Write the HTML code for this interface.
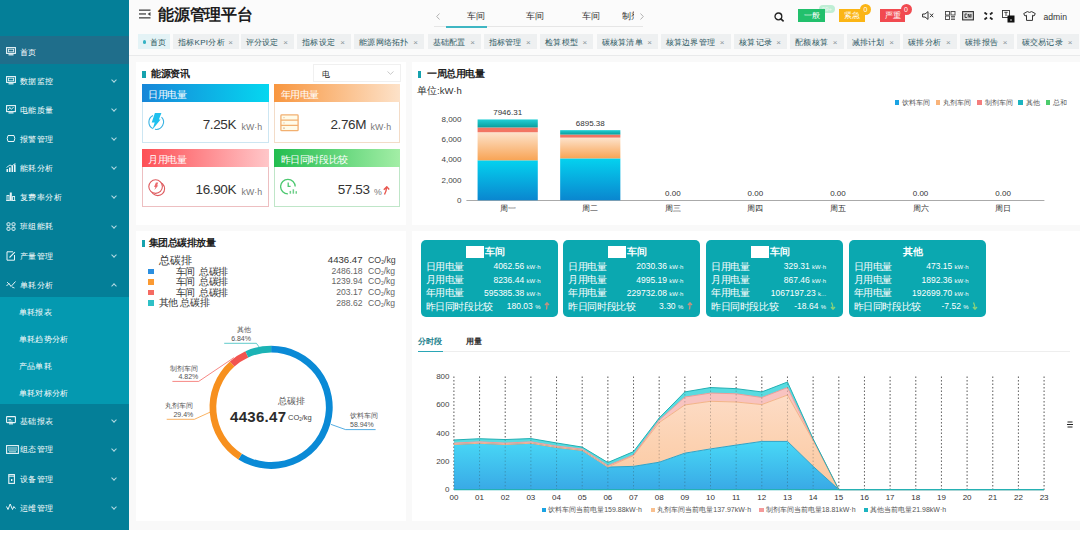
<!DOCTYPE html><html><head><meta charset="utf-8"><style>
html,body{margin:0;padding:0;width:1080px;height:559px;overflow:hidden;background:#fff;font-family:"Liberation Sans",sans-serif;}
.a{position:absolute;}
.t{position:absolute;white-space:nowrap;}
.si{position:absolute;left:0;width:129px;height:0;color:#fff;font-size:8px;}
.si span{position:absolute;left:20px;top:-4px;line-height:10px;white-space:nowrap;letter-spacing:0.4px;}

.si i{position:absolute;left:112px;top:-2.5px;width:3px;height:3px;border-right:0.8px solid #b5dbe3;border-bottom:0.8px solid #b5dbe3;transform:rotate(45deg);}
.ss{position:absolute;left:18.5px;color:#fff;font-size:8px;line-height:10px;white-space:nowrap;letter-spacing:0.4px;}
.tab{position:absolute;top:34px;height:15px;background:#eef0f1;color:#2a5560;font-size:8px;line-height:17px;white-space:nowrap;}
.tab span{position:absolute;left:5px;top:0;letter-spacing:0.3px;}
.tab b{position:absolute;right:6px;top:-0.5px;font-weight:normal;color:#8a9499;font-size:8px;}
.ttl{position:absolute;font-size:10px;letter-spacing:-0.5px;font-weight:bold;color:#222;line-height:12px;white-space:nowrap;}
.mk{position:absolute;width:3.5px;height:7px;background:#16a2ae;}
.ech{position:absolute;color:#fff;font-size:10px;letter-spacing:-0.35px;line-height:21px;height:18px;white-space:nowrap;}
.ech span{position:absolute;left:6.5px;top:0;}
.ecb{position:absolute;box-sizing:border-box;border:1px solid #cfe7f1;border-top:none;background:#fff;}
.val{position:absolute;font-size:13.5px;color:#333;line-height:14px;letter-spacing:-0.4px;white-space:nowrap;text-align:right;}
.unit{position:absolute;font-size:8.8px;color:#777;line-height:10px;white-space:nowrap;}
.wc{position:absolute;top:239.5px;width:137px;height:77.5px;background:#0ba8b0;border-radius:5px;color:#fff;}
.wc .h{position:absolute;top:6px;left:0;width:100%;text-align:center;font-weight:bold;font-size:10px;line-height:12px;}
.wc .l{position:absolute;left:5px;font-size:10px;letter-spacing:-0.4px;line-height:11px;white-space:nowrap;}
.wc .v{position:absolute;right:17px;font-size:8.5px;line-height:11px;text-align:right;white-space:nowrap;}
.wc .u{font-size:6px;}
.lg{position:absolute;font-size:7px;color:#555;line-height:9px;white-space:nowrap;}
</style></head><body>
<div class="a" style="left:0;top:0;width:129px;height:530px;background:#047f98;"></div>
<div class="a" style="left:0;top:36px;width:129px;height:28px;background:#1f6e8b;"></div>
<div class="a" style="left:0;top:297px;width:129px;height:107px;background:#0499b0;"></div>
<div class="si" style="top:51.5px;"><div class="a" style="left:5.5px;top:-4.5px;"><svg width="10" height="9" viewBox="0 0 10 9"><rect x="0.6" y="0.6" width="8.8" height="5.8" fill="none" stroke="#eaf5f8" stroke-width="1.1"/><rect x="2.4" y="2.2" width="5.2" height="2.6" fill="none" stroke="#eaf5f8" stroke-width="0.8"/><rect x="2.5" y="7.2" width="5" height="1.2" fill="#eaf5f8"/></svg></div><span>首页</span></div>
<div class="si" style="top:80.5px;"><div class="a" style="left:5.5px;top:-4.5px;"><svg width="10" height="9" viewBox="0 0 10 9"><rect x="0.6" y="0.6" width="8.8" height="5.8" fill="none" stroke="#eaf5f8" stroke-width="1.1"/><rect x="2.4" y="2.2" width="5.2" height="2.6" fill="none" stroke="#eaf5f8" stroke-width="0.8"/><rect x="2.5" y="7.2" width="5" height="1.2" fill="#eaf5f8"/></svg></div><span>数据监控</span><i></i></div>
<div class="si" style="top:109.5px;"><div class="a" style="left:5.5px;top:-4.5px;"><svg width="10" height="9" viewBox="0 0 10 9"><rect x="0.6" y="0.6" width="8.8" height="6" fill="none" stroke="#eaf5f8" stroke-width="1.1"/><path d="M2.2 5 L3.8 2.4 L5.4 4.4 L7.6 2" fill="none" stroke="#eaf5f8" stroke-width="0.9"/><rect x="2.5" y="7.3" width="5" height="1.2" fill="#eaf5f8"/></svg></div><span>电能质量</span><i></i></div>
<div class="si" style="top:138.5px;"><div class="a" style="left:5.5px;top:-4.5px;"><svg width="10" height="9" viewBox="0 0 10 9"><path d="M2 1.5 H8 L8.8 4.5 L8 7.5 H2 L1.2 4.5 Z" fill="none" stroke="#eaf5f8" stroke-width="1"/></svg></div><span>报警管理</span><i></i></div>
<div class="si" style="top:167.5px;"><div class="a" style="left:5.5px;top:-4.5px;"><svg width="10" height="9" viewBox="0 0 10 9"><rect x="0.5" y="6" width="1.6" height="3" fill="#eaf5f8"/><rect x="3" y="4.5" width="1.6" height="4.5" fill="#eaf5f8"/><rect x="5.5" y="3" width="1.6" height="6" fill="#eaf5f8"/><rect x="8" y="1.5" width="1.6" height="7.5" fill="#eaf5f8"/><path d="M0.5 4.5 L4 2 L6 3 L9.5 0.3" fill="none" stroke="#eaf5f8" stroke-width="0.9"/></svg></div><span>能耗分析</span><i></i></div>
<div class="si" style="top:196.7px;"><div class="a" style="left:5.5px;top:-4.5px;"><svg width="10" height="9" viewBox="0 0 10 9"><rect x="1" y="3.5" width="2" height="5" fill="none" stroke="#eaf5f8" stroke-width="0.9"/><rect x="3.8" y="0.5" width="2" height="8" fill="#eaf5f8"/><rect x="6.6" y="4.5" width="2" height="4" fill="none" stroke="#eaf5f8" stroke-width="0.9"/><path d="M0 8.6 H9.5" stroke="#eaf5f8" stroke-width="0.8"/></svg></div><span>复费率分析</span><i></i></div>
<div class="si" style="top:226px;"><div class="a" style="left:5.5px;top:-4.5px;"><svg width="10" height="9" viewBox="0 0 10 9"><rect x="1" y="0.8" width="3" height="3" rx="0.8" fill="none" stroke="#eaf5f8" stroke-width="1"/><rect x="6" y="0.8" width="3" height="3" rx="0.8" fill="none" stroke="#eaf5f8" stroke-width="1"/><rect x="1" y="5.3" width="3" height="3" rx="0.8" fill="none" stroke="#eaf5f8" stroke-width="1"/><rect x="6" y="5.3" width="3" height="3" rx="0.8" fill="none" stroke="#eaf5f8" stroke-width="1"/></svg></div><span>班组能耗</span><i></i></div>
<div class="si" style="top:255.5px;"><div class="a" style="left:5.5px;top:-4.5px;"><svg width="10" height="10" viewBox="0 0 10 10"><path d="M7 0.8 H1 V9.2 H8.5 V4" fill="none" stroke="#eaf5f8" stroke-width="1"/><path d="M3.5 6.5 L8.8 1.2" stroke="#eaf5f8" stroke-width="1.1"/></svg></div><span>产量管理</span><i></i></div>
<div class="si" style="top:284.7px;"><div class="a" style="left:5.5px;top:-4.5px;"><svg width="10" height="9" viewBox="0 0 10 9"><path d="M0.5 6 L3 3.5 L5 6.5 L9.5 1.5" fill="none" stroke="#eaf5f8" stroke-width="1"/><path d="M1 2 L3 4 M6 7 L8.5 8" stroke="#eaf5f8" stroke-width="0.9"/></svg></div><span>单耗分析</span><i style="transform:rotate(-135deg);top:-1px;"></i></div>
<div class="si" style="top:420.5px;"><div class="a" style="left:5.5px;top:-4.5px;"><svg width="10" height="9" viewBox="0 0 10 9"><rect x="0.6" y="0.6" width="8.8" height="6" rx="0.5" fill="none" stroke="#eaf5f8" stroke-width="1.1"/><path d="M2.5 3.5 H5 M2.5 5 H6.5" stroke="#eaf5f8" stroke-width="0.8"/><rect x="3" y="7.3" width="4" height="1.1" fill="#eaf5f8"/></svg></div><span>基础报表</span><i></i></div>
<div class="si" style="top:449.3px;"><div class="a" style="left:5.5px;top:-4.5px;"><svg width="13" height="9" viewBox="0 0 13 9"><rect x="0.6" y="0.6" width="11.8" height="7.8" fill="none" stroke="#eaf5f8" stroke-width="1.1"/><path d="M2 3 H11 M2 5 H11 M3 6.8 H10" stroke="#eaf5f8" stroke-width="0.8"/></svg></div><span>组态管理</span><i></i></div>
<div class="si" style="top:478.5px;"><div class="a" style="left:5.5px;top:-4.5px;"><svg width="10" height="10" viewBox="0 0 10 10"><rect x="2.8" y="0.6" width="5.6" height="8.8" fill="none" stroke="#eaf5f8" stroke-width="1.1"/><path d="M2.8 2.2 H8.4" stroke="#eaf5f8" stroke-width="1"/><rect x="5" y="5" width="1.4" height="2" fill="#eaf5f8"/></svg></div><span>设备管理</span><i></i></div>
<div class="si" style="top:507.5px;"><div class="a" style="left:5.5px;top:-4.5px;"><svg width="10" height="8" viewBox="0 0 10 8"><path d="M0.5 3.5 L2 6.5 L4.2 1 L6.5 6.5 L7.8 3.5 L9.5 5.5" fill="none" stroke="#eaf5f8" stroke-width="1"/></svg></div><span>运维管理</span><i></i></div>
<div class="ss" style="top:308px;">单耗报表</div>
<div class="ss" style="top:335.4px;">单耗趋势分析</div>
<div class="ss" style="top:362px;">产品单耗</div>
<div class="ss" style="top:389px;">单耗对标分析</div>
<div class="a" style="left:129px;top:0;width:951px;height:56px;background:#fbfbfb;"></div>
<div class="a" style="left:129px;top:55px;width:951px;height:1px;background:#e9eaeb;"></div>
<div class="a" style="left:129px;top:56px;width:951px;height:474px;background:#f9f9f9;"></div>
<svg class="a" style="left:139px;top:9px;" width="12" height="10" viewBox="0 0 12 10"><rect x="0" y="0.5" width="11.5" height="1.3" fill="#444"/><rect x="0" y="4.3" width="7" height="1.3" fill="#444"/><rect x="0" y="8.2" width="11.5" height="1.3" fill="#444"/><path d="M11.5 3 L8.6 4.95 L11.5 6.9 Z" fill="#444"/></svg>
<div class="t" style="left:158px;top:4.8px;font-size:15.5px;line-height:19px;font-weight:bold;color:#1d1d1d;letter-spacing:-0.2px;">能源管理平台</div>
<svg class="a" style="left:435.5px;top:13px;" width="4" height="7" viewBox="0 0 4 7"><path d="M3.5 0.5 L0.7 3.5 L3.5 6.5" fill="none" stroke="#aaa" stroke-width="0.9"/></svg>
<svg class="a" style="left:639.5px;top:13px;" width="4" height="7" viewBox="0 0 4 7"><path d="M0.5 0.5 L3.3 3.5 L0.5 6.5" fill="none" stroke="#aaa" stroke-width="0.9"/></svg>
<div class="a" style="left:434px;top:26px;width:209px;height:1px;background:#e6e6e6;"></div>
<div class="a" style="left:446px;top:25.5px;width:41px;height:2px;background:#3fb6c3;"></div>
<div class="t" style="left:467px;top:11px;font-size:9px;line-height:11px;color:#333;">车间</div>
<div class="t" style="left:526px;top:11px;font-size:9px;line-height:11px;color:#333;">车间</div>
<div class="t" style="left:582px;top:11px;font-size:9px;line-height:11px;color:#333;">车间</div>
<div class="a" style="left:622px;top:9px;width:12px;height:14px;overflow:hidden;"><div class="t" style="left:0;top:2px;font-size:9px;line-height:11px;color:#333;">制剂</div></div>
<svg class="a" style="left:773.5px;top:12px;" width="11" height="10" viewBox="0 0 11 10"><circle cx="4.4" cy="4.4" r="3.4" fill="none" stroke="#222" stroke-width="1.3"/><path d="M6.9 6.9 L9.6 9.4" stroke="#222" stroke-width="1.6"/></svg>
<div class="t" style="left:819px;top:5px;width:16px;height:8px;border-radius:4px;background:#bfeed5;color:#e9f9f0;font-size:6px;line-height:8px;text-align:center;">99+</div>
<div class="t" style="left:798px;top:9px;width:27px;height:13px;background:#22c06c;color:#fff;font-size:8px;line-height:13px;text-align:center;">一般</div>
<div class="t" style="left:839px;top:9px;width:26px;height:13px;background:#fbb515;color:#fff;font-size:8px;line-height:13px;text-align:center;">紧急</div>
<div class="t" style="left:860px;top:3.5px;width:11px;height:11px;border-radius:6px;background:#fbb515;color:#fff;font-size:7px;line-height:11px;text-align:center;">0</div>
<div class="t" style="left:880px;top:9px;width:25px;height:13px;background:#f14a50;color:#fff;font-size:8px;line-height:13px;text-align:center;">严重</div>
<div class="t" style="left:900.5px;top:3.5px;width:11px;height:11px;border-radius:6px;background:#f14a50;color:#fff;font-size:7px;line-height:11px;text-align:center;">0</div>
<svg class="a" style="left:922px;top:11px;" width="12" height="9" viewBox="0 0 12 9"><path d="M0.6 3 H3 L6 0.6 V8.4 L3 6 H0.6 Z" fill="none" stroke="#333" stroke-width="1"/><path d="M8 2.6 L11.2 6.2 M11.2 2.6 L8 6.2" stroke="#333" stroke-width="1"/></svg>
<svg class="a" style="left:945px;top:11px;" width="11" height="9" viewBox="0 0 11 9"><rect x="0.5" y="0.5" width="4" height="3.5" fill="none" stroke="#444" stroke-width="0.9"/><rect x="6" y="0.5" width="4" height="3.5" fill="none" stroke="#444" stroke-width="0.9"/><rect x="0.5" y="5" width="4" height="3.5" fill="none" stroke="#444" stroke-width="0.9"/><path d="M6 5.5 H10 M6 7 H10 M6 8.5 H10" stroke="#444" stroke-width="0.8"/></svg>
<svg class="a" style="left:962px;top:11px;" width="12" height="9.5" viewBox="0 0 12 9.5"><rect x="0.6" y="0.6" width="10.8" height="8.3" fill="#ddd" stroke="#333" stroke-width="1.1"/><path d="M3 3 H5 M3 3 V6.5 H5 M6.2 6.5 V3 L8 6.5 V3 M9 3 V6.5" stroke="#333" stroke-width="0.9" fill="none"/></svg>
<svg class="a" style="left:984px;top:12px;" width="9" height="8" viewBox="0 0 9 8"><path d="M0.5 0.5 L3 2.5 M8.5 0.5 L6 2.5 M0.5 7.5 L3 5.5 M8.5 7.5 L6 5.5" stroke="#222" stroke-width="1.8"/></svg>
<svg class="a" style="left:1002px;top:9.5px;" width="13" height="13" viewBox="0 0 13 13"><rect x="0.5" y="0.5" width="7" height="7" fill="#fff" stroke="#333" stroke-width="0.9"/><path d="M2.3 2.3 H5.7 M4 2.3 V6" stroke="#333" stroke-width="0.9"/><rect x="5.5" y="5.5" width="7" height="7" fill="#111"/><path d="M8 10 H10" stroke="#fff" stroke-width="0.8"/></svg>
<svg class="a" style="left:1023px;top:11px;" width="13" height="10" viewBox="0 0 13 10"><path d="M4.3 0.6 Q6.5 2.2 8.7 0.6 L12.3 2.6 L11 5 L9.5 4.3 V9.4 H3.5 V4.3 L2 5 L0.7 2.6 Z" fill="none" stroke="#333" stroke-width="1" stroke-linejoin="round"/></svg>
<div class="t" style="left:1043.5px;top:12px;font-size:8.6px;line-height:11px;color:#333;">admin</div>
<div class="tab" style="left:138px;width:32px;background:#e4f3f6;"><i class="a" style="left:4.5px;top:6px;width:3.5px;height:3.5px;border-radius:2px;background:#36b3c4;"></i><span style="left:11.5px;">首页</span></div>
<div class="tab" style="left:173px;width:66px;"><span>指标KPI分析</span><b>&#215;</b></div>
<div class="tab" style="left:240.5px;width:53.5px;"><span>评分设定</span><b>&#215;</b></div>
<div class="tab" style="left:297px;width:54px;"><span>指标设定</span><b>&#215;</b></div>
<div class="tab" style="left:354px;width:70px;"><span>能源网络拓扑</span><b>&#215;</b></div>
<div class="tab" style="left:427.5px;width:53.5px;"><span>基础配置</span><b>&#215;</b></div>
<div class="tab" style="left:483.6px;width:53.2px;"><span>指标管理</span><b>&#215;</b></div>
<div class="tab" style="left:540px;width:53.2px;"><span>检算模型</span><b>&#215;</b></div>
<div class="tab" style="left:596.5px;width:61.5px;"><span>碳核算清单</span><b>&#215;</b></div>
<div class="tab" style="left:660.5px;width:70px;"><span>核算边界管理</span><b>&#215;</b></div>
<div class="tab" style="left:734px;width:53px;"><span>核算记录</span><b>&#215;</b></div>
<div class="tab" style="left:790px;width:53.5px;"><span>配额核算</span><b>&#215;</b></div>
<div class="tab" style="left:846.5px;width:53.5px;"><span>减排计划</span><b>&#215;</b></div>
<div class="tab" style="left:903px;width:53.6px;"><span>碳排分析</span><b>&#215;</b></div>
<div class="tab" style="left:960px;width:53.5px;"><span>碳排报告</span><b>&#215;</b></div>
<div class="tab" style="left:1016.5px;width:62px;"><span>碳交易记录</span><b>&#215;</b></div>
<div class="a" style="left:136px;top:62px;width:270px;height:163px;background:#fff;"></div>
<div class="a" style="left:412px;top:62px;width:668px;height:163px;background:#fff;"></div>
<div class="a" style="left:136px;top:231px;width:270px;height:290px;background:#fff;"></div>
<div class="a" style="left:412px;top:231px;width:668px;height:290px;background:#fff;"></div>
<div class="mk" style="left:142px;top:71px;"></div>
<div class="ttl" style="left:151px;top:68px;">能源资讯</div>
<div class="a" style="left:312.7px;top:64.3px;width:88px;height:17.5px;box-sizing:border-box;border:1px solid #f0f0f0;background:#fff;"></div>
<div class="t" style="left:322.3px;top:69.5px;font-size:8px;line-height:10px;color:#222;">电</div>
<svg class="a" style="left:386.5px;top:70.5px;" width="7" height="4" viewBox="0 0 7 4"><path d="M0.5 0.5 L3.5 3.3 L6.5 0.5" fill="none" stroke="#bbb" stroke-width="0.8"/></svg>
<div class="ech" style="left:141.7px;top:84.2px;width:127px;background:linear-gradient(90deg,#1786d8,#05d7f0);"><span>日用电量</span></div>
<div class="ecb" style="left:141.7px;top:102.2px;width:127px;height:40.5px;border-color:#cde6f2;"></div>
<svg class="a" style="left:147px;top:112px;" width="19" height="19" viewBox="0 0 19 19"><path d="M6.00 3.54 A7.3 7.3 0 0 0 5.77 16.55" fill="none" stroke="#3ab2e2" stroke-width="1.1"/><path d="M14.54 5.12 A7.3 7.3 0 0 1 7.93 17.29" fill="none" stroke="#3ab2e2" stroke-width="1.1"/><path d="M7.9 1 L14.4 1 L11.9 7.6 L13.6 7.6 L5.5 17.6 L7.7 10.4 L4.7 10.4 Z" fill="#1ec0ee"/></svg>
<div class="val" style="right:844px;top:118.2px;">7.25K</div>
<div class="unit" style="left:241.5px;top:121.7px;">kW·h</div>
<div class="ech" style="left:274px;top:84.2px;width:126px;background:linear-gradient(90deg,#f8963f,#fde2c9);"><span>年用电量</span></div>
<div class="ecb" style="left:274px;top:102.2px;width:126px;height:40.5px;border-color:#f3dcc8;"></div>
<svg class="a" style="left:280px;top:113.5px;" width="19" height="18" viewBox="0 0 19 18"><rect x="0.9" y="0.9" width="17.2" height="15.8" rx="0.8" fill="#fffbe9" stroke="#f2b070" stroke-width="1.3"/><path d="M0.9 6.1 H18.1 M0.9 11.4 H18.1" stroke="#f2b070" stroke-width="1.3"/><rect x="3.4" y="3" width="1.2" height="1.2" fill="#e8c9a8"/><rect x="3.4" y="8.3" width="1.2" height="1.2" fill="#e8c9a8"/><rect x="3.2" y="13.6" width="1.6" height="1" fill="#c9a07a"/></svg>
<div class="val" style="right:714px;top:118.2px;">2.76M</div>
<div class="unit" style="left:370.5px;top:121.7px;">kW·h</div>
<div class="ech" style="left:141.7px;top:149px;width:127px;background:linear-gradient(90deg,#fd4f55,#ffc7c9);"><span>月用电量</span></div>
<div class="ecb" style="left:141.7px;top:167px;width:127px;height:39.5px;border-color:#edbfc1;"></div>
<svg class="a" style="left:148px;top:178.5px;" width="19" height="18" viewBox="0 0 19 18"><circle cx="9.8" cy="9.8" r="6.8" fill="#fff" stroke="#de5a5e" stroke-width="1.1"/><circle cx="7.6" cy="7.6" r="6.8" fill="#fff" stroke="#de5a5e" stroke-width="1.1"/><path d="M7.9 3.6 L10.2 3.6 L9.1 6.6 L10.3 6.6 L6.4 11 L7.4 7.9 L6.1 7.9 Z" fill="#ec6a6e"/></svg>
<div class="val" style="right:844px;top:183px;">16.90K</div>
<div class="unit" style="left:241.5px;top:186.5px;">kW·h</div>
<div class="ech" style="left:274px;top:149px;width:126px;background:linear-gradient(90deg,#22bd4f,#a3eea6);"><span>昨日同时段比较</span></div>
<div class="ecb" style="left:274px;top:167px;width:126px;height:39.5px;border-color:#bfe6c8;"></div>
<svg class="a" style="left:280px;top:178px;" width="19" height="18" viewBox="0 0 19 18"><path d="M15.2 8.6 A7.3 7.3 0 1 0 7.9 15.9" fill="none" stroke="#4cc870" stroke-width="1.3"/><path d="M8.2 4.6 V8.3 H10.6" fill="none" stroke="#4cc870" stroke-width="1.3"/><rect x="9.6" y="12.9" width="1.5" height="2.8" fill="#6fcf8a"/><rect x="12.6" y="11.3" width="1.5" height="4.4" fill="#6fcf8a"/><rect x="15.5" y="13.2" width="1.5" height="2.5" fill="#6fcf8a"/></svg>
<div class="val" style="right:710.5px;top:183px;">57.53</div>
<div class="unit" style="left:374px;top:186.5px;">%</div>
<svg class="a" style="left:383px;top:186px;" width="7" height="9" viewBox="0 0 7 9"><path d="M1.5 8.5 Q3.5 5 3.5 1.5 M0.8 3.8 L3.8 0.8 L6.2 3.5" fill="none" stroke="#e8574f" stroke-width="1.4"/></svg>
<div class="mk" style="left:417.5px;top:71px;"></div>
<div class="ttl" style="left:427px;top:68px;">一周总用电量</div>
<div class="t" style="left:417px;top:85px;font-size:9.5px;line-height:11px;color:#333;">单位:kW·h</div>
<svg class="a" style="left:0;top:0;" width="1080" height="559" viewBox="0 0 1080 559"><defs><linearGradient id="gb" x1="0" y1="1" x2="0" y2="0"><stop offset="0" stop-color="#0a86cf"/><stop offset="1" stop-color="#04d2ef"/></linearGradient><linearGradient id="go" x1="0" y1="1" x2="0" y2="0"><stop offset="0" stop-color="#f8a455"/><stop offset="1" stop-color="#fde3cc"/></linearGradient><linearGradient id="gt" x1="0" y1="1" x2="0" y2="0"><stop offset="0" stop-color="#0a9e9c"/><stop offset="1" stop-color="#22cfd6"/></linearGradient></defs><text x="461.5" y="121.6" text-anchor="end" font-size="8" fill="#444" font-family="Liberation Sans">8,000</text><text x="461.5" y="141.95000000000002" text-anchor="end" font-size="8" fill="#444" font-family="Liberation Sans">6,000</text><text x="461.5" y="162.3" text-anchor="end" font-size="8" fill="#444" font-family="Liberation Sans">4,000</text><text x="461.5" y="182.65" text-anchor="end" font-size="8" fill="#444" font-family="Liberation Sans">2,000</text><text x="461.5" y="203.0" text-anchor="end" font-size="8" fill="#444" font-family="Liberation Sans">0</text><rect x="466.4" y="200" width="578" height="1" fill="#aaa"/><text x="507.68571428571425" y="210.8" text-anchor="middle" font-size="8" fill="#333" font-family="Liberation Sans">周一</text><rect x="477.58571428571423" y="160.31225" width="60.2" height="39.987750000000005" fill="url(#gb)"/><rect x="477.58571428571423" y="132.22925" width="60.2" height="28.083" fill="url(#go)"/><rect x="477.58571428571423" y="127.447" width="60.2" height="4.782250000000005" fill="#f27563"/><rect x="477.58571428571423" y="119.44945" width="60.2" height="7.997550000000004" fill="url(#gt)"/><text x="507.68571428571425" y="115.44945" text-anchor="middle" font-size="8" fill="#333" font-family="Liberation Sans">7946.31</text><text x="590.2571428571429" y="210.8" text-anchor="middle" font-size="8" fill="#333" font-family="Liberation Sans">周二</text><rect x="560.1571428571428" y="158.37900000000002" width="60.2" height="41.92099999999999" fill="url(#gb)"/><rect x="560.1571428571428" y="137.622" width="60.2" height="20.757000000000005" fill="url(#go)"/><rect x="560.1571428571428" y="134.5695" width="60.2" height="3.052500000000009" fill="#f27563"/><rect x="560.1571428571428" y="130.143375" width="60.2" height="4.426125000000013" fill="url(#gt)"/><text x="590.2571428571429" y="126.14337499999999" text-anchor="middle" font-size="8" fill="#333" font-family="Liberation Sans">6895.38</text><text x="672.8285714285714" y="210.8" text-anchor="middle" font-size="8" fill="#333" font-family="Liberation Sans">周三</text><text x="672.8285714285714" y="196" text-anchor="middle" font-size="8" fill="#333" font-family="Liberation Sans">0.00</text><text x="755.4" y="210.8" text-anchor="middle" font-size="8" fill="#333" font-family="Liberation Sans">周四</text><text x="755.4" y="196" text-anchor="middle" font-size="8" fill="#333" font-family="Liberation Sans">0.00</text><text x="837.9714285714285" y="210.8" text-anchor="middle" font-size="8" fill="#333" font-family="Liberation Sans">周五</text><text x="837.9714285714285" y="196" text-anchor="middle" font-size="8" fill="#333" font-family="Liberation Sans">0.00</text><text x="920.5428571428571" y="210.8" text-anchor="middle" font-size="8" fill="#333" font-family="Liberation Sans">周六</text><text x="920.5428571428571" y="196" text-anchor="middle" font-size="8" fill="#333" font-family="Liberation Sans">0.00</text><text x="1003.1142857142856" y="210.8" text-anchor="middle" font-size="8" fill="#333" font-family="Liberation Sans">周日</text><text x="1003.1142857142856" y="196" text-anchor="middle" font-size="8" fill="#333" font-family="Liberation Sans">0.00</text></svg>
<div class="a" style="left:894.7px;top:100.3px;width:4.5px;height:4.5px;background:#1aa3e3;"></div>
<div class="lg" style="left:902.2px;top:98px;">饮料车间</div>
<div class="a" style="left:935.8px;top:100.3px;width:4.5px;height:4.5px;background:#f9b47a;"></div>
<div class="lg" style="left:943.3px;top:98px;">丸剂车间</div>
<div class="a" style="left:977px;top:100.3px;width:4.5px;height:4.5px;background:#f47d7d;"></div>
<div class="lg" style="left:984.5px;top:98px;">制剂车间</div>
<div class="a" style="left:1018.3px;top:100.3px;width:4.5px;height:4.5px;background:#1cb4c0;"></div>
<div class="lg" style="left:1025.8px;top:98px;">其他</div>
<div class="a" style="left:1045.8px;top:100.3px;width:4.5px;height:4.5px;background:#4ccc6c;"></div>
<div class="lg" style="left:1053.3px;top:98px;">总和</div>
<div class="mk" style="left:141.7px;top:239.7px;"></div>
<div class="ttl" style="left:148.5px;top:237px;">集团总碳排放量</div>
<div class="t" style="left:158.5px;top:254px;font-size:10.5px;line-height:12px;color:#333;">总碳排</div>
<div class="t" style="right:717.5px;top:254px;font-size:9.6px;line-height:12px;color:#333;">4436.47</div>
<div class="t" style="left:368px;top:254px;font-size:8.8px;line-height:12px;color:#444;">CO<sub style="font-size:5px;vertical-align:-1px;">2</sub>/kg</div>
<div class="a" style="left:148.2px;top:268.7px;width:5.7px;height:5.7px;background:#2b8fe0;"></div>
<div class="t" style="left:175.5px;top:265.5px;font-size:10px;letter-spacing:-0.3px;line-height:12px;color:#333;">车间</div>
<div class="t" style="left:199.0px;top:265.5px;font-size:10px;letter-spacing:-0.3px;line-height:12px;color:#333;">总碳排</div>
<div class="t" style="right:717.5px;top:266.0px;font-size:8.6px;line-height:11px;color:#666;">2486.18</div>
<div class="t" style="left:368px;top:266.0px;font-size:8.6px;line-height:11px;color:#666;">CO<sub style="font-size:5px;vertical-align:-1px;">2</sub>/kg</div>
<div class="a" style="left:148.2px;top:279.0px;width:5.7px;height:5.7px;background:#fb9a32;"></div>
<div class="t" style="left:175.5px;top:275.8px;font-size:10px;letter-spacing:-0.3px;line-height:12px;color:#333;">车间</div>
<div class="t" style="left:199.0px;top:275.8px;font-size:10px;letter-spacing:-0.3px;line-height:12px;color:#333;">总碳排</div>
<div class="t" style="right:717.5px;top:276.3px;font-size:8.6px;line-height:11px;color:#666;">1239.94</div>
<div class="t" style="left:368px;top:276.3px;font-size:8.6px;line-height:11px;color:#666;">CO<sub style="font-size:5px;vertical-align:-1px;">2</sub>/kg</div>
<div class="a" style="left:148.2px;top:289.7px;width:5.7px;height:5.7px;background:#f56b62;"></div>
<div class="t" style="left:175.5px;top:286.5px;font-size:10px;letter-spacing:-0.3px;line-height:12px;color:#333;">车间</div>
<div class="t" style="left:199.0px;top:286.5px;font-size:10px;letter-spacing:-0.3px;line-height:12px;color:#333;">总碳排</div>
<div class="t" style="right:717.5px;top:287.0px;font-size:8.6px;line-height:11px;color:#666;">203.17</div>
<div class="t" style="left:368px;top:287.0px;font-size:8.6px;line-height:11px;color:#666;">CO<sub style="font-size:5px;vertical-align:-1px;">2</sub>/kg</div>
<div class="a" style="left:148.2px;top:300.4px;width:5.7px;height:5.7px;background:#2ec0c6;"></div>
<div class="t" style="left:158.5px;top:297.2px;font-size:10px;letter-spacing:-0.3px;line-height:12px;color:#333;">其他</div>
<div class="t" style="left:180.4px;top:297.2px;font-size:10px;letter-spacing:-0.3px;line-height:12px;color:#333;">总碳排</div>
<div class="t" style="right:717.5px;top:297.7px;font-size:8.6px;line-height:11px;color:#666;">288.62</div>
<div class="t" style="left:368px;top:297.7px;font-size:8.6px;line-height:11px;color:#666;">CO<sub style="font-size:5px;vertical-align:-1px;">2</sub>/kg</div>
<svg class="a" style="left:0;top:0;" width="1080" height="559" viewBox="0 0 1080 559"><path d="M271.10 345.70 A61.6 61.6 0 1 1 238.29 459.43 L241.91 453.68 A54.8 54.8 0 1 0 271.10 352.50 Z" fill="#0a8ad6"/><path d="M238.29 459.43 A61.6 61.6 0 0 1 229.90 361.51 L234.45 366.56 A54.8 54.8 0 0 0 241.91 453.68 Z" fill="#f7901e"/><path d="M229.90 361.51 A61.6 61.6 0 0 1 245.43 351.30 L248.27 357.48 A54.8 54.8 0 0 0 234.45 366.56 Z" fill="#f2544f"/><path d="M245.43 351.30 A61.6 61.6 0 0 1 271.10 345.70 L271.10 352.50 A54.8 54.8 0 0 0 248.27 357.48 Z" fill="#1bb3b5"/><polyline points="224.2,343.3 256.4,343.3 259.5,347.5" fill="none" stroke="#1bb3b5" stroke-width="0.7"/><polyline points="172.4,381.4 198.7,381.4 234,357.6" fill="none" stroke="#f2544f" stroke-width="0.7"/><polyline points="166.7,419.3 194.4,419.3 210,412.2" fill="none" stroke="#f7901e" stroke-width="0.7"/><polyline points="331,424.4 345.6,429.6 375.6,429.6" fill="none" stroke="#0a8ad6" stroke-width="0.7"/></svg>
<div class="t" style="right:829px;top:325px;font-size:7px;line-height:9px;color:#555;">其他</div>
<div class="t" style="right:829px;top:333.8px;font-size:7px;line-height:9px;color:#555;">6.84%</div>
<div class="t" style="right:881.7px;top:363.5px;font-size:7px;line-height:9px;color:#555;">制剂车间</div>
<div class="t" style="right:881.7px;top:372.4px;font-size:7px;line-height:9px;color:#555;">4.82%</div>
<div class="t" style="right:886.7px;top:401px;font-size:7px;line-height:9px;color:#555;">丸剂车间</div>
<div class="t" style="right:886.7px;top:409.5px;font-size:7px;line-height:9px;color:#555;">29.4%</div>
<div class="t" style="left:350px;top:411px;font-size:7px;line-height:9px;color:#555;">饮料车间</div>
<div class="t" style="left:350px;top:419.8px;font-size:7px;line-height:9px;color:#555;">58.94%</div>
<div class="t" style="left:277.5px;top:395.5px;font-size:8.5px;line-height:11px;color:#555;">总碳排</div>
<div class="t" style="left:230px;top:408px;font-size:15px;line-height:17px;font-weight:bold;color:#2b2b2b;letter-spacing:0.3px;">4436.47</div>
<div class="t" style="left:288px;top:412.5px;font-size:7.5px;line-height:9px;color:#444;">CO<sub style="font-size:4.5px;vertical-align:-1px;">2</sub>/kg</div>
<div class="wc" style="left:420.5px;">
<div class="h" style="text-align:left;left:64px;width:auto;">车间</div>
<div class="a" style="left:45px;top:6px;width:18px;height:12px;background:#fff;"></div>
<div class="l" style="top:21px;">日用电量</div>
<div class="v" style="top:21.5px;">4062.56 <span class="u">kW·h</span></div>
<div class="l" style="top:34.8px;">月用电量</div>
<div class="v" style="top:35.3px;">8236.44 <span class="u">kW·h</span></div>
<div class="l" style="top:47.6px;">年用电量</div>
<div class="v" style="top:48.1px;">595385.38 <span class="u">kW·h</span></div>
<div class="l" style="top:61.3px;">昨日同时段比较</div>
<div class="v" style="top:61.8px;">180.03 <span class="u">%</span></div>
<svg class="a" style="left:123.5px;top:62px;" width="6" height="8" viewBox="0 0 6 8"><path d="M2.5 7.5 Q3 4.5 3 1.2 M1 3 L3 0.8 L5 3" fill="none" stroke="#c89080" stroke-width="1.3"/></svg>
</div>
<div class="wc" style="left:563.3px;">
<div class="h" style="text-align:left;left:64px;width:auto;">车间</div>
<div class="a" style="left:45px;top:6px;width:18px;height:12px;background:#fff;"></div>
<div class="l" style="top:21px;">日用电量</div>
<div class="v" style="top:21.5px;">2030.36 <span class="u">kW·h</span></div>
<div class="l" style="top:34.8px;">月用电量</div>
<div class="v" style="top:35.3px;">4995.19 <span class="u">kW·h</span></div>
<div class="l" style="top:47.6px;">年用电量</div>
<div class="v" style="top:48.1px;">229732.08 <span class="u">kW·h</span></div>
<div class="l" style="top:61.3px;">昨日同时段比较</div>
<div class="v" style="top:61.8px;">3.30 <span class="u">%</span></div>
<svg class="a" style="left:123.5px;top:62px;" width="6" height="8" viewBox="0 0 6 8"><path d="M2.5 7.5 Q3 4.5 3 1.2 M1 3 L3 0.8 L5 3" fill="none" stroke="#c89080" stroke-width="1.3"/></svg>
</div>
<div class="wc" style="left:706.1px;">
<div class="h" style="text-align:left;left:64px;width:auto;">车间</div>
<div class="a" style="left:45px;top:6px;width:18px;height:12px;background:#fff;"></div>
<div class="l" style="top:21px;">日用电量</div>
<div class="v" style="top:21.5px;">329.31 <span class="u">kW·h</span></div>
<div class="l" style="top:34.8px;">月用电量</div>
<div class="v" style="top:35.3px;">867.46 <span class="u">kW·h</span></div>
<div class="l" style="top:47.6px;">年用电量</div>
<div class="v" style="top:48.1px;">1067197.23 <span class="u">k...</span></div>
<div class="l" style="top:61.3px;">昨日同时段比较</div>
<div class="v" style="top:61.8px;">-18.64 <span class="u">%</span></div>
<svg class="a" style="left:123.5px;top:62px;" width="6" height="8" viewBox="0 0 6 8"><path d="M1.5 0.5 Q3 3.5 3 6.8 M1 5 L3 7.2 L5 5" fill="none" stroke="#8ad27a" stroke-width="1.3"/></svg>
</div>
<div class="wc" style="left:848.6px;">
<div class="h" style="left:-4.5px;">其他</div>
<div class="l" style="top:21px;">日用电量</div>
<div class="v" style="top:21.5px;">473.15 <span class="u">kW·h</span></div>
<div class="l" style="top:34.8px;">月用电量</div>
<div class="v" style="top:35.3px;">1892.36 <span class="u">kW·h</span></div>
<div class="l" style="top:47.6px;">年用电量</div>
<div class="v" style="top:48.1px;">192699.70 <span class="u">kW·h</span></div>
<div class="l" style="top:61.3px;">昨日同时段比较</div>
<div class="v" style="top:61.8px;">-7.52 <span class="u">%</span></div>
<svg class="a" style="left:123.5px;top:62px;" width="6" height="8" viewBox="0 0 6 8"><path d="M1.5 0.5 Q3 3.5 3 6.8 M1 5 L3 7.2 L5 5" fill="none" stroke="#8ad27a" stroke-width="1.3"/></svg>
</div>
<div class="t" style="left:417.5px;top:335.5px;font-size:8px;line-height:11px;font-weight:bold;color:#1c7f8c;">分时段</div>
<div class="t" style="left:465.5px;top:335.5px;font-size:8px;line-height:11px;font-weight:bold;color:#333;">用量</div>
<div class="a" style="left:417.5px;top:351px;width:652px;height:1px;background:#eeeeee;"></div>
<div class="a" style="left:417.5px;top:350.5px;width:25px;height:1.6px;background:#2aa6b6;"></div>
<svg class="a" style="left:0;top:0;" width="1080" height="559" viewBox="0 0 1080 559"><defs><linearGradient id="ab" x1="0" y1="0" x2="0" y2="1"><stop offset="0" stop-color="#48d8f6"/><stop offset="1" stop-color="#39a9e6"/></linearGradient><linearGradient id="ao" x1="0" y1="0" x2="0" y2="1"><stop offset="0" stop-color="#fddcc6"/><stop offset="1" stop-color="#fbc89e"/></linearGradient></defs><text x="449.5" y="379.00000000000006" text-anchor="end" font-size="8" fill="#444" font-family="Liberation Sans">800</text><text x="449.5" y="407.35" text-anchor="end" font-size="8" fill="#444" font-family="Liberation Sans">600</text><text x="449.5" y="435.70000000000005" text-anchor="end" font-size="8" fill="#444" font-family="Liberation Sans">400</text><text x="449.5" y="464.05" text-anchor="end" font-size="8" fill="#444" font-family="Liberation Sans">200</text><text x="449.5" y="492.40000000000003" text-anchor="end" font-size="8" fill="#444" font-family="Liberation Sans">0</text><text x="453.90" y="500.3" text-anchor="middle" font-size="8" fill="#333" font-family="Liberation Sans">00</text><text x="479.56" y="500.3" text-anchor="middle" font-size="8" fill="#333" font-family="Liberation Sans">01</text><text x="505.22" y="500.3" text-anchor="middle" font-size="8" fill="#333" font-family="Liberation Sans">02</text><text x="530.88" y="500.3" text-anchor="middle" font-size="8" fill="#333" font-family="Liberation Sans">03</text><text x="556.54" y="500.3" text-anchor="middle" font-size="8" fill="#333" font-family="Liberation Sans">04</text><text x="582.20" y="500.3" text-anchor="middle" font-size="8" fill="#333" font-family="Liberation Sans">05</text><text x="607.86" y="500.3" text-anchor="middle" font-size="8" fill="#333" font-family="Liberation Sans">06</text><text x="633.52" y="500.3" text-anchor="middle" font-size="8" fill="#333" font-family="Liberation Sans">07</text><text x="659.18" y="500.3" text-anchor="middle" font-size="8" fill="#333" font-family="Liberation Sans">08</text><text x="684.84" y="500.3" text-anchor="middle" font-size="8" fill="#333" font-family="Liberation Sans">09</text><text x="710.50" y="500.3" text-anchor="middle" font-size="8" fill="#333" font-family="Liberation Sans">10</text><text x="736.16" y="500.3" text-anchor="middle" font-size="8" fill="#333" font-family="Liberation Sans">11</text><text x="761.82" y="500.3" text-anchor="middle" font-size="8" fill="#333" font-family="Liberation Sans">12</text><text x="787.48" y="500.3" text-anchor="middle" font-size="8" fill="#333" font-family="Liberation Sans">13</text><text x="813.14" y="500.3" text-anchor="middle" font-size="8" fill="#333" font-family="Liberation Sans">14</text><text x="838.80" y="500.3" text-anchor="middle" font-size="8" fill="#333" font-family="Liberation Sans">15</text><text x="864.46" y="500.3" text-anchor="middle" font-size="8" fill="#333" font-family="Liberation Sans">16</text><text x="890.12" y="500.3" text-anchor="middle" font-size="8" fill="#333" font-family="Liberation Sans">17</text><text x="915.78" y="500.3" text-anchor="middle" font-size="8" fill="#333" font-family="Liberation Sans">18</text><text x="941.44" y="500.3" text-anchor="middle" font-size="8" fill="#333" font-family="Liberation Sans">19</text><text x="967.10" y="500.3" text-anchor="middle" font-size="8" fill="#333" font-family="Liberation Sans">20</text><text x="992.76" y="500.3" text-anchor="middle" font-size="8" fill="#333" font-family="Liberation Sans">21</text><text x="1018.42" y="500.3" text-anchor="middle" font-size="8" fill="#333" font-family="Liberation Sans">22</text><text x="1044.08" y="500.3" text-anchor="middle" font-size="8" fill="#333" font-family="Liberation Sans">23</text><line x1="453.90" y1="376.5" x2="453.90" y2="489.6" stroke="#333" stroke-opacity="0.8" stroke-width="0.8" stroke-dasharray="1.5,2"/><line x1="479.56" y1="376.5" x2="479.56" y2="489.6" stroke="#333" stroke-opacity="0.8" stroke-width="0.8" stroke-dasharray="1.5,2"/><line x1="505.22" y1="376.5" x2="505.22" y2="489.6" stroke="#333" stroke-opacity="0.8" stroke-width="0.8" stroke-dasharray="1.5,2"/><line x1="530.88" y1="376.5" x2="530.88" y2="489.6" stroke="#333" stroke-opacity="0.8" stroke-width="0.8" stroke-dasharray="1.5,2"/><line x1="556.54" y1="376.5" x2="556.54" y2="489.6" stroke="#333" stroke-opacity="0.8" stroke-width="0.8" stroke-dasharray="1.5,2"/><line x1="582.20" y1="376.5" x2="582.20" y2="489.6" stroke="#333" stroke-opacity="0.8" stroke-width="0.8" stroke-dasharray="1.5,2"/><line x1="607.86" y1="376.5" x2="607.86" y2="489.6" stroke="#333" stroke-opacity="0.8" stroke-width="0.8" stroke-dasharray="1.5,2"/><line x1="633.52" y1="376.5" x2="633.52" y2="489.6" stroke="#333" stroke-opacity="0.8" stroke-width="0.8" stroke-dasharray="1.5,2"/><line x1="659.18" y1="376.5" x2="659.18" y2="489.6" stroke="#333" stroke-opacity="0.8" stroke-width="0.8" stroke-dasharray="1.5,2"/><line x1="684.84" y1="376.5" x2="684.84" y2="489.6" stroke="#333" stroke-opacity="0.8" stroke-width="0.8" stroke-dasharray="1.5,2"/><line x1="710.50" y1="376.5" x2="710.50" y2="489.6" stroke="#333" stroke-opacity="0.8" stroke-width="0.8" stroke-dasharray="1.5,2"/><line x1="736.16" y1="376.5" x2="736.16" y2="489.6" stroke="#333" stroke-opacity="0.8" stroke-width="0.8" stroke-dasharray="1.5,2"/><line x1="761.82" y1="376.5" x2="761.82" y2="489.6" stroke="#333" stroke-opacity="0.8" stroke-width="0.8" stroke-dasharray="1.5,2"/><line x1="787.48" y1="376.5" x2="787.48" y2="489.6" stroke="#333" stroke-opacity="0.8" stroke-width="0.8" stroke-dasharray="1.5,2"/><line x1="813.14" y1="376.5" x2="813.14" y2="489.6" stroke="#333" stroke-opacity="0.8" stroke-width="0.8" stroke-dasharray="1.5,2"/><line x1="838.80" y1="376.5" x2="838.80" y2="489.6" stroke="#333" stroke-opacity="0.8" stroke-width="0.8" stroke-dasharray="1.5,2"/><line x1="864.46" y1="376.5" x2="864.46" y2="489.6" stroke="#333" stroke-opacity="0.8" stroke-width="0.8" stroke-dasharray="1.5,2"/><line x1="890.12" y1="376.5" x2="890.12" y2="489.6" stroke="#333" stroke-opacity="0.8" stroke-width="0.8" stroke-dasharray="1.5,2"/><line x1="915.78" y1="376.5" x2="915.78" y2="489.6" stroke="#333" stroke-opacity="0.8" stroke-width="0.8" stroke-dasharray="1.5,2"/><line x1="941.44" y1="376.5" x2="941.44" y2="489.6" stroke="#333" stroke-opacity="0.8" stroke-width="0.8" stroke-dasharray="1.5,2"/><line x1="967.10" y1="376.5" x2="967.10" y2="489.6" stroke="#333" stroke-opacity="0.8" stroke-width="0.8" stroke-dasharray="1.5,2"/><line x1="992.76" y1="376.5" x2="992.76" y2="489.6" stroke="#333" stroke-opacity="0.8" stroke-width="0.8" stroke-dasharray="1.5,2"/><line x1="1018.42" y1="376.5" x2="1018.42" y2="489.6" stroke="#333" stroke-opacity="0.8" stroke-width="0.8" stroke-dasharray="1.5,2"/><line x1="1044.08" y1="376.5" x2="1044.08" y2="489.6" stroke="#333" stroke-opacity="0.8" stroke-width="0.8" stroke-dasharray="1.5,2"/><path d="M453.90,444.52 L479.56,443.25 L505.22,444.52 L530.88,443.25 L556.54,447.50 L582.20,450.48 L607.86,467.06 L633.52,466.35 L659.18,462.24 L684.84,453.17 L710.50,448.92 L736.16,445.09 L761.82,441.41 L787.48,441.41 L813.14,466.35 L838.80,489.60 L864.46,489.60 L890.12,489.60 L915.78,489.60 L941.44,489.60 L967.10,489.60 L992.76,489.60 L1018.42,489.60 L1044.08,489.60 L1044.08,489.60 L1018.42,489.60 L992.76,489.60 L967.10,489.60 L941.44,489.60 L915.78,489.60 L890.12,489.60 L864.46,489.60 L838.80,489.60 L813.14,489.60 L787.48,489.60 L761.82,489.60 L736.16,489.60 L710.50,489.60 L684.84,489.60 L659.18,489.60 L633.52,489.60 L607.86,489.60 L582.20,489.60 L556.54,489.60 L530.88,489.60 L505.22,489.60 L479.56,489.60 L453.90,489.60 Z" fill="url(#ab)"/><path d="M453.90,444.52 L479.56,443.25 L505.22,444.52 L530.88,443.25 L556.54,447.50 L582.20,450.48 L607.86,467.06 L633.52,455.58 L659.18,422.55 L684.84,404.98 L710.50,401.29 L736.16,402.00 L761.82,404.55 L787.48,395.05 L813.14,440.55 L838.80,489.60 L864.46,489.60 L890.12,489.60 L915.78,489.60 L941.44,489.60 L967.10,489.60 L992.76,489.60 L1018.42,489.60 L1044.08,489.60 L1044.08,489.60 L1018.42,489.60 L992.76,489.60 L967.10,489.60 L941.44,489.60 L915.78,489.60 L890.12,489.60 L864.46,489.60 L838.80,489.60 L813.14,466.35 L787.48,441.41 L761.82,441.41 L736.16,445.09 L710.50,448.92 L684.84,453.17 L659.18,462.24 L633.52,466.35 L607.86,467.06 L582.20,450.48 L556.54,447.50 L530.88,443.25 L505.22,444.52 L479.56,443.25 L453.90,444.52 Z" fill="url(#ao)"/><path d="M453.90,443.11 L479.56,441.83 L505.22,443.11 L530.88,441.83 L556.54,446.08 L582.20,449.06 L607.86,465.64 L633.52,455.01 L659.18,420.14 L684.84,397.04 L710.50,393.07 L736.16,393.78 L761.82,397.46 L787.48,387.54 L813.14,439.85 L838.80,489.60 L864.46,489.60 L890.12,489.60 L915.78,489.60 L941.44,489.60 L967.10,489.60 L992.76,489.60 L1018.42,489.60 L1044.08,489.60 L1044.08,489.60 L1018.42,489.60 L992.76,489.60 L967.10,489.60 L941.44,489.60 L915.78,489.60 L890.12,489.60 L864.46,489.60 L838.80,489.60 L813.14,440.55 L787.48,395.05 L761.82,404.55 L736.16,402.00 L710.50,401.29 L684.84,404.98 L659.18,422.55 L633.52,455.58 L607.86,467.06 L582.20,450.48 L556.54,447.50 L530.88,443.25 L505.22,444.52 L479.56,443.25 L453.90,444.52 Z" fill="#f8c3c0"/><path d="M453.90,439.99 L479.56,438.71 L505.22,439.56 L530.88,438.57 L556.54,442.96 L582.20,447.08 L607.86,462.53 L633.52,451.61 L659.18,418.02 L684.84,391.93 L710.50,387.54 L736.16,388.67 L761.82,391.93 L787.48,382.01 L813.14,438.85 L838.80,489.60 L864.46,489.60 L890.12,489.60 L915.78,489.60 L941.44,489.60 L967.10,489.60 L992.76,489.60 L1018.42,489.60 L1044.08,489.60 L1044.08,489.60 L1018.42,489.60 L992.76,489.60 L967.10,489.60 L941.44,489.60 L915.78,489.60 L890.12,489.60 L864.46,489.60 L838.80,489.60 L813.14,439.85 L787.48,387.54 L761.82,397.46 L736.16,393.78 L710.50,393.07 L684.84,397.04 L659.18,420.14 L633.52,455.01 L607.86,465.64 L582.20,449.06 L556.54,446.08 L530.88,441.83 L505.22,443.11 L479.56,441.83 L453.90,443.11 Z" fill="#58dbe0"/><polyline points="453.90,444.52 479.56,443.25 505.22,444.52 530.88,443.25 556.54,447.50 582.20,450.48 607.86,467.06 633.52,466.35 659.18,462.24 684.84,453.17 710.50,448.92 736.16,445.09 761.82,441.41 787.48,441.41 813.14,466.35 838.80,489.60 864.46,489.60 890.12,489.60 915.78,489.60 941.44,489.60 967.10,489.60 992.76,489.60 1018.42,489.60 1044.08,489.60" fill="none" stroke="#2ea3c8" stroke-width="1"/><polyline points="453.90,444.52 479.56,443.25 505.22,444.52 530.88,443.25 556.54,447.50 582.20,450.48 607.86,467.06 633.52,455.58 659.18,422.55 684.84,404.98 710.50,401.29 736.16,402.00 761.82,404.55 787.48,395.05 813.14,440.55 838.80,489.60 864.46,489.60 890.12,489.60 915.78,489.60 941.44,489.60 967.10,489.60 992.76,489.60 1018.42,489.60 1044.08,489.60" fill="none" stroke="#f3b487" stroke-width="1"/><polyline points="453.90,443.11 479.56,441.83 505.22,443.11 530.88,441.83 556.54,446.08 582.20,449.06 607.86,465.64 633.52,455.01 659.18,420.14 684.84,397.04 710.50,393.07 736.16,393.78 761.82,397.46 787.48,387.54 813.14,439.85 838.80,489.60 864.46,489.60 890.12,489.60 915.78,489.60 941.44,489.60 967.10,489.60 992.76,489.60 1018.42,489.60 1044.08,489.60" fill="none" stroke="#ee9c98" stroke-width="1"/><polyline points="453.90,439.99 479.56,438.71 505.22,439.56 530.88,438.57 556.54,442.96 582.20,447.08 607.86,462.53 633.52,451.61 659.18,418.02 684.84,391.93 710.50,387.54 736.16,388.67 761.82,391.93 787.48,382.01 813.14,438.85 838.80,489.60 864.46,489.60 890.12,489.60 915.78,489.60 941.44,489.60 967.10,489.60 992.76,489.60 1018.42,489.60 1044.08,489.60" fill="none" stroke="#22b0b4" stroke-width="1"/><line x1="453.90" y1="376.5" x2="453.90" y2="489.6" stroke="#333" stroke-opacity="0.35" stroke-width="0.8" stroke-dasharray="1.5,2"/><line x1="479.56" y1="376.5" x2="479.56" y2="489.6" stroke="#333" stroke-opacity="0.35" stroke-width="0.8" stroke-dasharray="1.5,2"/><line x1="505.22" y1="376.5" x2="505.22" y2="489.6" stroke="#333" stroke-opacity="0.35" stroke-width="0.8" stroke-dasharray="1.5,2"/><line x1="530.88" y1="376.5" x2="530.88" y2="489.6" stroke="#333" stroke-opacity="0.35" stroke-width="0.8" stroke-dasharray="1.5,2"/><line x1="556.54" y1="376.5" x2="556.54" y2="489.6" stroke="#333" stroke-opacity="0.35" stroke-width="0.8" stroke-dasharray="1.5,2"/><line x1="582.20" y1="376.5" x2="582.20" y2="489.6" stroke="#333" stroke-opacity="0.35" stroke-width="0.8" stroke-dasharray="1.5,2"/><line x1="607.86" y1="376.5" x2="607.86" y2="489.6" stroke="#333" stroke-opacity="0.35" stroke-width="0.8" stroke-dasharray="1.5,2"/><line x1="633.52" y1="376.5" x2="633.52" y2="489.6" stroke="#333" stroke-opacity="0.35" stroke-width="0.8" stroke-dasharray="1.5,2"/><line x1="659.18" y1="376.5" x2="659.18" y2="489.6" stroke="#333" stroke-opacity="0.35" stroke-width="0.8" stroke-dasharray="1.5,2"/><line x1="684.84" y1="376.5" x2="684.84" y2="489.6" stroke="#333" stroke-opacity="0.35" stroke-width="0.8" stroke-dasharray="1.5,2"/><line x1="710.50" y1="376.5" x2="710.50" y2="489.6" stroke="#333" stroke-opacity="0.35" stroke-width="0.8" stroke-dasharray="1.5,2"/><line x1="736.16" y1="376.5" x2="736.16" y2="489.6" stroke="#333" stroke-opacity="0.35" stroke-width="0.8" stroke-dasharray="1.5,2"/><line x1="761.82" y1="376.5" x2="761.82" y2="489.6" stroke="#333" stroke-opacity="0.35" stroke-width="0.8" stroke-dasharray="1.5,2"/><line x1="787.48" y1="376.5" x2="787.48" y2="489.6" stroke="#333" stroke-opacity="0.35" stroke-width="0.8" stroke-dasharray="1.5,2"/><line x1="813.14" y1="376.5" x2="813.14" y2="489.6" stroke="#333" stroke-opacity="0.35" stroke-width="0.8" stroke-dasharray="1.5,2"/><line x1="838.80" y1="376.5" x2="838.80" y2="489.6" stroke="#333" stroke-opacity="0.35" stroke-width="0.8" stroke-dasharray="1.5,2"/><line x1="864.46" y1="376.5" x2="864.46" y2="489.6" stroke="#333" stroke-opacity="0.35" stroke-width="0.8" stroke-dasharray="1.5,2"/><line x1="890.12" y1="376.5" x2="890.12" y2="489.6" stroke="#333" stroke-opacity="0.35" stroke-width="0.8" stroke-dasharray="1.5,2"/><line x1="915.78" y1="376.5" x2="915.78" y2="489.6" stroke="#333" stroke-opacity="0.35" stroke-width="0.8" stroke-dasharray="1.5,2"/><line x1="941.44" y1="376.5" x2="941.44" y2="489.6" stroke="#333" stroke-opacity="0.35" stroke-width="0.8" stroke-dasharray="1.5,2"/><line x1="967.10" y1="376.5" x2="967.10" y2="489.6" stroke="#333" stroke-opacity="0.35" stroke-width="0.8" stroke-dasharray="1.5,2"/><line x1="992.76" y1="376.5" x2="992.76" y2="489.6" stroke="#333" stroke-opacity="0.35" stroke-width="0.8" stroke-dasharray="1.5,2"/><line x1="1018.42" y1="376.5" x2="1018.42" y2="489.6" stroke="#333" stroke-opacity="0.35" stroke-width="0.8" stroke-dasharray="1.5,2"/><line x1="1044.08" y1="376.5" x2="1044.08" y2="489.6" stroke="#333" stroke-opacity="0.35" stroke-width="0.8" stroke-dasharray="1.5,2"/><line x1="453.9" y1="489.6" x2="1044.08" y2="489.6" stroke="#24b1b3" stroke-width="1.2"/></svg>
<div class="a" style="left:541.7px;top:507.5px;width:4.5px;height:4.5px;background:#1aa3e3;"></div>
<div class="lg" style="left:548.2px;top:505.3px;">饮料车间当前电量159.88kW·h</div>
<div class="a" style="left:650.8px;top:507.5px;width:4.5px;height:4.5px;background:#f9c08f;"></div>
<div class="lg" style="left:657.3px;top:505.3px;">丸剂车间当前电量137.97kW·h</div>
<div class="a" style="left:759.2px;top:507.5px;width:4.5px;height:4.5px;background:#f59a9a;"></div>
<div class="lg" style="left:765.7px;top:505.3px;">制剂车间当前电量18.81kW·h</div>
<div class="a" style="left:863.8px;top:507.5px;width:4.5px;height:4.5px;background:#1cb4c0;"></div>
<div class="lg" style="left:870.3px;top:505.3px;">其他当前电量21.98kW·h</div>
<svg class="a" style="left:1067px;top:420.5px;" width="6" height="7" viewBox="0 0 6 7"><path d="M0.5 1 H5.5 M0 3.5 H6 M0.5 6 H5.5" stroke="#222" stroke-width="1.2"/></svg>
</body></html>
